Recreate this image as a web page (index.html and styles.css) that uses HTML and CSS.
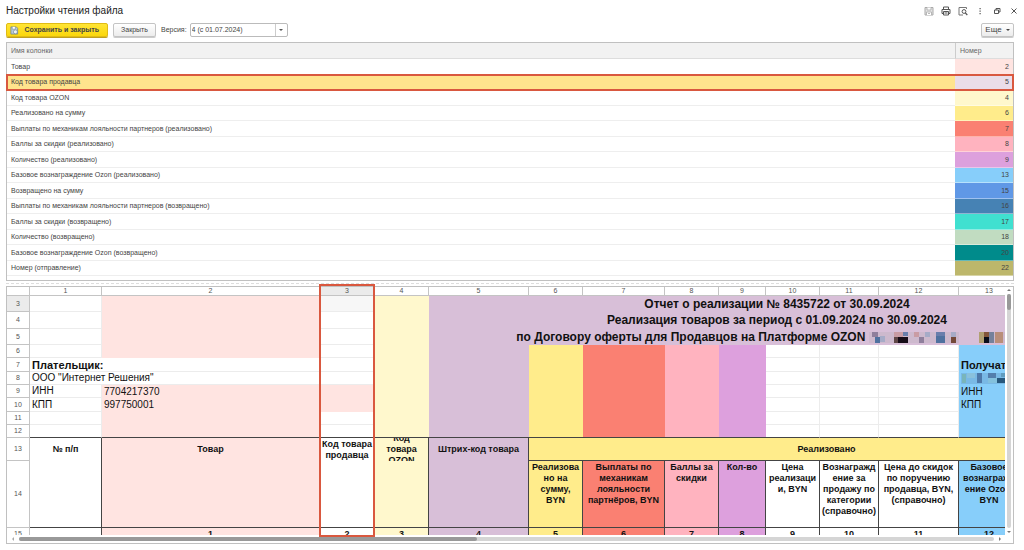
FILE: index.html
```html
<!DOCTYPE html>
<html lang="ru">
<head>
<meta charset="utf-8">
<title>Настройки чтения файла</title>
<link rel="stylesheet" href="styles.css">
</head>
<body>
<header class="titlebar">
  <h1>Настройки чтения файла</h1>
  <div class="tools">
    <button class="tool" aria-label="Сохранить"><svg viewBox="0 0 10 10"><path d="M1 1.500h8v7.500H1z" fill="#e4e4e4" stroke="#aaa"/><path d="M3 1.500v2.500h4V1.500M2.500 9V6h5v3M4 7.500h2" fill="#fff" stroke="#aaa" stroke-width=".8"/></svg></button>
    <button class="tool" aria-label="Печать"><svg viewBox="0 0 10 10"><path d="M2.500 3V1h5v2M2.500 7.500h-1.500V3.500h8v4H7.500M2.500 5.500h5V9h-5zM3.500 7h3" fill="none" stroke="#555"/></svg></button>
    <button class="tool" aria-label="Просмотр"><svg viewBox="0 0 10 10"><path d="M8.500 3V1.500h-7.500v7.500h4" fill="none" stroke="#777"/><circle cx="6" cy="5.500" r="1.900" fill="#fff" stroke="#555"/><path d="M7.400 7l1.900 2" stroke="#555" stroke-width="1.200"/></svg></button>
    <button class="tool" aria-label="Меню"><svg viewBox="0 0 10 10"><path d="M4.500 2h1.200v1.200H4.500zM4.500 4.500h1.200v1.200H4.500zM4.500 7h1.200v1.200H4.500z" fill="#555"/></svg></button>
    <button class="tool" aria-label="Восстановить"><svg viewBox="0 0 10 10"><path d="M4 4V2.500h4V6H6.500M2.500 4h4v3.500h-4z" fill="none" stroke="#555"/></svg></button>
    <button class="tool" aria-label="Закрыть окно"><svg viewBox="0 0 10 10"><path d="M2.500 2.500l5 5M7.500 2.500l-5 5" stroke="#555"/></svg></button>
  </div>
</header>

<div class="commands">
  <button class="btn primary"><svg viewBox="0 0 10 10"><path d="M1 1h6l1.500 1.500V9H1z" fill="#b9cbd8" stroke="#6b8190" stroke-width=".8"/><path d="M2.500 1v2.500h3.500V1" fill="#fff" stroke="#6b8190" stroke-width=".6"/><circle cx="6" cy="6.500" r="2.200" fill="#eef3f6" stroke="#6b8190" stroke-width=".7"/></svg>Сохранить и закрыть</button>
  <button class="btn close">Закрыть</button>
  <label for="version">Версия:</label>
  <span class="combo"><select id="version"><option>4 (с 01.07.2024)</option></select></span>
  <button class="btn more">Еще<i class="caret"></i></button>
</div>

<table class="list">
  <thead><tr><th>Имя колонки</th><th class="num">Номер</th></tr></thead>
  <tbody>
    <tr><td>Товар</td><td class="num c-rose">2</td></tr>
    <tr class="selected"><td>Код товара продавца</td><td class="num c-lilac">5</td></tr>
    <tr><td>Код товара OZON</td><td class="num c-cream">4</td></tr>
    <tr><td>Реализовано на сумму</td><td class="num c-yellow">6</td></tr>
    <tr><td>Выплаты по механикам лояльности партнеров (реализовано)</td><td class="num c-salmon">7</td></tr>
    <tr><td>Баллы за скидки (реализовано)</td><td class="num c-pink">8</td></tr>
    <tr><td>Количество (реализовано)</td><td class="num c-plum">9</td></tr>
    <tr><td>Базовое вознаграждение Ozon (реализовано)</td><td class="num c-sky">13</td></tr>
    <tr><td>Возвращено на сумму</td><td class="num c-blue">15</td></tr>
    <tr><td>Выплаты по механикам лояльности партнеров (возвращено)</td><td class="num c-steel">16</td></tr>
    <tr><td>Баллы за скидки (возвращено)</td><td class="num c-turquoise">17</td></tr>
    <tr><td>Количество (возвращено)</td><td class="num c-sage">18</td></tr>
    <tr><td>Базовое вознаграждение Ozon (возвращено)</td><td class="num c-teal">20</td></tr>
    <tr><td>Номер (отправление)</td><td class="num c-khaki">22</td></tr>
  </tbody>
</table>
<div class="splitter"></div>

<main class="sheet">
  <div class="view">
    <div class="cells">
      <table class="grid">
        <colgroup><col class="w23"><col class="w72"><col class="w218"><col class="w55"><col class="w54"><col class="w100"><col class="w54"><col class="w82"><col class="w54"><col class="w47"><col class="w54"><col class="w59"><col class="w80"><col class="w61"><col class="w105"></colgroup>
        <thead>
          <tr><th></th><th>1</th><th>2</th><th class="active">3</th><th>4</th><th>5</th><th>6</th><th>7</th><th>8</th><th>9</th><th>10</th><th>11</th><th>12</th><th>13</th><th></th></tr>
        </thead>
        <tbody>
          <tr class="h16"><th class="active">3</th><td></td><td class="c-rose" rowspan="4"></td><td class="current"></td><td class="c-cream to-head" rowspan="10"></td><td class="c-thistle title" colspan="10">Отчет о реализации № 8435722 от 30.09.2024</td></tr>
          <tr class="h17"><th>4</th><td></td><td></td><td class="c-thistle title" colspan="10">Реализация товаров за период с 01.09.2024 по 30.09.2024</td></tr>
          <tr class="h16"><th>5</th><td></td><td></td><td class="c-thistle title" colspan="10">по Договору оферты для Продавцов на Платформе OZON <svg class="mask" viewBox="0 0 169 11" shape-rendering="crispEdges"><path d="M0 0h90v11H0zM110 0h59v11h-59z" fill="#cdb9cd"/><path d="M3 0h6v5H3zM50 5h5v6h-5z" fill="#8f7f9c"/><path d="M6 5h5v6H6zM67 4h9v7h-9z" fill="#4f719f"/><path d="M11 4h5v6h-5zM56 0h5v5h-5zM82 0h5v5h-5z" fill="#a6abc7"/><path d="M25 0h9v5h-9zM45 0h5v5h-5z" fill="#c99ca4"/><path d="M67 0h9v4h-9zM34 0h5v4h-5z" fill="#697eac"/><path d="M25 5h5v6h-5z" fill="#604747"/><path d="M29 5h10v6H29z" fill="#160b17"/><path d="M82 5h5v6h-5z" fill="#744939"/><path d="M110 0h5v11h-5z" fill="#b1a073"/><path d="M115 5h5v6h-5z" fill="#080c18"/><path d="M115 0h5v5h-5z" fill="#83563b"/><path d="M120 0h5v11h-5z" fill="#75819b"/><path d="M126 0h8v11h-8z" fill="#b98e79"/></svg></td></tr>
          <tr class="h13"><th>6</th><td></td><td></td><td class="c-thistle to-head" rowspan="7"></td><td class="c-yellow to-head" rowspan="7"></td><td class="c-salmon to-head" rowspan="7"></td><td class="c-pink to-head" rowspan="7"></td><td class="c-plum to-head" rowspan="7"></td><td></td><td></td><td></td><td class="c-sky" colspan="2"></td></tr>
          <tr class="h14"><th>7</th><td class="payer" colspan="2">Плательщик:</td><td></td><td></td><td></td><td></td><td class="c-sky payer" colspan="2">Получатель:</td></tr>
          <tr class="h13"><th>8</th><td class="text" colspan="2">ООО "Интернет Решения"</td><td></td><td></td><td></td><td></td><td class="c-sky text" colspan="2"><svg class="mask-small" viewBox="0 0 54 11" shape-rendering="crispEdges"><path d="M0 0h54v11H0z" fill="#79b9e5"/><path d="M1 1h4v9H1z" fill="#79b5ba"/><path d="M6 0h8v5H6z" fill="#8ac1dc"/><path d="M16 0h5v10h-5z" fill="#4d78a9"/><path d="M27 0h8v5h-8z" fill="#537eac"/><path d="M27 5h9v5h-9z" fill="#83c1dd"/><path d="M36 5h8v5h-8z" fill="#27587d"/><path d="M40 0h6v4h-6z" fill="#609cbf"/></svg></td></tr>
          <tr class="h13"><th>9</th><td class="text">ИНН</td><td class="c-rose text">7704217370</td><td class="c-rose"></td><td></td><td></td><td></td><td class="c-sky text" colspan="2">ИНН</td></tr>
          <tr class="h14"><th>10</th><td class="text">КПП</td><td class="c-rose text">997750001</td><td class="c-rose"></td><td></td><td></td><td></td><td class="c-sky text" colspan="2">КПП</td></tr>
          <tr class="h13"><th>11</th><td></td><td class="c-rose to-head" rowspan="2"></td><td></td><td></td><td></td><td></td><td class="c-sky" colspan="2"></td></tr>
          <tr class="h13 before-head"><th>12</th><td></td><td></td><td></td><td></td><td></td><td class="c-sky to-head" colspan="2"></td></tr>
          <tr class="h23 head"><th>13</th><td class="open">№ п/п</td><td class="c-rose open">Товар</td><td class="open"><div class="clip">Код товара продавца</div></td><td class="c-cream open"><div class="clip">Код<br>товара<br>OZON</div></td><td class="c-thistle open">Штрих-код товара</td><td class="c-yellow" colspan="9">Реализовано</td></tr>
          <tr class="h67 head"><th>14</th><td></td><td class="c-rose"></td><td></td><td class="c-cream"></td><td class="c-thistle"></td><td class="c-yellow">Реализова<br>но на<br>сумму,<br>BYN</td><td class="c-salmon">Выплаты по механикам лояльности партнёров, BYN</td><td class="c-pink">Баллы за скидки</td><td class="c-plum">Кол-во</td><td>Цена реализаци<br>и, BYN</td><td>Вознагражд<br>ение за продажу по категории (справочно)</td><td>Цена до скидок по поручению продавца, BYN, (справочно)</td><td class="c-sky">Базовое вознагражд<br>ение Ozon,<br>BYN</td><td></td></tr>
          <tr class="h13 head"><th>15</th><td></td><td class="c-rose">1</td><td>2</td><td class="c-cream">3</td><td class="c-thistle">4</td><td class="c-yellow">5</td><td class="c-salmon">6</td><td class="c-pink">7</td><td class="c-plum">8</td><td>9</td><td>10</td><td>11</td><td class="c-sky">12</td><td></td></tr>
        </tbody>
      </table>
    </div>
    <div class="vbar"><i class="arrow up"></i><div class="track"><div class="thumb"></div></div><i class="arrow down"></i></div>
  </div>
  <div class="hbar"><i class="arrow left"></i><div class="track"><div class="thumb"></div></div><i class="arrow right"></i></div>
  <div class="marker"></div>
</main>
</body>
</html>
```
FILE: styles.css
```css
* { box-sizing: border-box; }
body {
  margin: 0;
  height: 100vh;
  padding: 4px 10px 6px 6px;
  display: flex;
  flex-direction: column;
  background: #fff;
  color: #444;
  font: 7px/10px "Liberation Sans", Arial, sans-serif;
}
button, select { font: inherit; color: inherit; margin: 0; }

.titlebar { display: flex; justify-content: space-between; height: 14px; align-items: center; margin-right: -5px; flex: none; }
h1 { margin: 0; font-size: 10px; line-height: 14px; font-weight: 400; color: #222; }
.tools { display: flex; gap: 7px; }
.tool { width: 10px; height: 10px; padding: 0; border: 0; background: none; }
.tool svg { display: block; width: 10px; height: 10px; }

.commands { display: flex; align-items: center; height: 14px; margin: 5px 0; flex: none; }
.btn {
  height: 14px;
  padding: 0 7px;
  border: 1px solid #c4c4c4;
  border-radius: 2px;
  background: linear-gradient(#fff, #ececec);
  box-shadow: 0 1px 0 #ccc;
  line-height: 12px;
  white-space: nowrap;
}
.primary {
  width: 102px;
  display: flex;
  align-items: center;
  justify-content: space-between;
  padding: 0 8px 0 3px;
  border-color: #e0bb15;
  background: linear-gradient(#ffe535, #fbd70c);
  box-shadow: 0 1px 0 #bf9f20;
  font-weight: 700;
}
.primary svg { width: 9px; height: 9px; }
.close { width: 43px; margin: 0 5px; }
.combo { position: relative; margin-left: 3px; }
.combo select {
  display: block;
  width: 98px;
  height: 14px;
  padding: 0 1px;
  border: 1px solid #bbb;
  border-radius: 2px;
  background: #fff;
  appearance: none;
}
.combo::before { content: ""; position: absolute; right: 12px; top: 1px; bottom: 1px; border-left: 1px solid #ccc; }
.combo::after { content: ""; position: absolute; right: 5px; top: 6px; border: 2px solid transparent; border-top-color: #555; border-bottom: 0; }
.more { margin-left: auto; width: 33px; padding: 0; display: flex; align-items: center; justify-content: center; gap: 4px; font-size: 8px; }
.caret { border: 2px solid transparent; border-top-color: #444; border-bottom: 0; }

.list {
  width: 100%;
  flex: none;
  table-layout: fixed;
  border-collapse: separate;
  border-spacing: 0;
  border: 1px solid #c0c0c0;
  padding-bottom: 4px;
}
.list th, .list td { height: 15px; padding: 0 4px; line-height: 14px; text-align: left; font-weight: 400; border-bottom: 1px solid #eee; }
.list tr:nth-child(odd) td { height: 16px; }
.list thead th { height: 16px; background: #f2f2f2; color: #666; border-bottom-color: #ddd; }
.list .num { width: 58px; text-align: right; }
.list th.num { text-align: left; border-left: 1px solid #ccc; }
.list td.num { border-bottom-color: #ffffff66; }
.selected td:first-child { background: #ffe48d; }
.selected { outline: 2px solid #d9583f; outline-offset: -1px; }

.splitter { border-top: 1px dashed #ddd; margin: 2px 0; flex: none; }

.sheet {
  position: relative;
  flex: 1;
  min-height: 0;
  display: flex;
  flex-direction: column;
  border: 1px solid #c0c0c0;
}
.view { flex: 1; min-height: 0; display: flex; }
.cells { flex: 1; min-width: 0; overflow: hidden; }
.grid { width: 1118px; table-layout: fixed; border-collapse: separate; border-spacing: 0; color: #111; }
.grid th, .grid td { padding: 0; overflow: hidden; white-space: nowrap; border: 0 solid #ececec; border-width: 0 1px 1px 0; }
.grid th { font-weight: 400; color: #555; border-color: #c4c4c4; background: #fff; }
.grid thead th { height: 9px; line-height: 8px; }
.grid th.active { background: #ebebeb; }
.grid .current { background: #f7f7f7; }
.grid td[class^="c-"] { border-width: 0; }
.w23 { width: 23px; } .w47 { width: 47px; } .w54 { width: 54px; } .w55 { width: 55px; }
.w59 { width: 59px; } .w61 { width: 61px; } .w72 { width: 72px; } .w80 { width: 80px; }
.w82 { width: 82px; } .w100 { width: 100px; } .w105 { width: 105px; } .w218 { width: 218px; }
.h13 > * { height: 13px; } .h14 > * { height: 14px; } .h16 > * { height: 16px; }
.h17 > * { height: 17px; } .h23 > * { height: 23px; } .h67 > * { height: 67px; }
.grid .title { font-size: 12px; line-height: 15px; font-weight: 700; text-align: center; }
.grid .payer { padding-left: 2px; font-size: 11px; line-height: 12px; font-weight: 700; }
.grid .text { padding-left: 2px; font-size: 10px; line-height: 12px; }
.mask { width: 169px; height: 11px; vertical-align: middle; }
.mask-small { display: block; width: 54px; height: 11px; }

.grid .before-head > td, .grid td.to-head { border-bottom: 1px solid #444; }
.grid .head td, .grid .head td[class^="c-"] { border: 0 solid #444; border-width: 0 1px 1px 0; }
.grid .head td { font-size: 9px; line-height: 11px; font-weight: 700; text-align: center; white-space: normal; }
.grid .head td.open, .grid .head td.open[class^="c-"] { border-bottom-width: 0; }
.grid .h23 td:not(.open) { line-height: 20px; }
.grid .h67 td { vertical-align: top; padding-top: 1px; }
.clip { height: 23px; overflow: hidden; display: flex; align-items: center; justify-content: center; }

.vbar { width: 8px; padding: 2px 1px; display: flex; flex-direction: column; align-items: center; gap: 3px; }
.vbar .track { flex: 1; width: 4px; border-radius: 2px; background: #d5d5d5; }
.vbar .thumb { height: 16px; border-radius: 2px; background: #999; }
.hbar { height: 8px; padding: 0 12px 0 5px; display: flex; align-items: center; gap: 5px; }
.hbar .track { flex: 1; height: 4px; border-radius: 2px; background: #d5d5d5; }
.hbar .thumb { width: 47%; height: 4px; border-radius: 2px; background: #999; }
.arrow { border: 2px solid transparent; }
.up { border-bottom-color: #777; border-top: 0; }
.down { border-top-color: #777; border-bottom: 0; }
.left { border-right-color: #aaa; border-left: 0; }
.right { border-left-color: #777; border-right: 0; }
.marker { position: absolute; left: 312px; top: -3px; bottom: 6px; width: 56px; border: 2px solid #d9583f; }

.c-rose { background: #ffe4e1; }
.c-lilac { background: #eadde8; }
.c-cream { background: #fff8cd; }
.c-yellow { background: #ffec8b; }
.c-salmon { background: #fa8072; }
.c-pink { background: #ffb3bf; }
.c-plum { background: #dda0dd; }
.c-thistle { background: #d8bfd8; }
.c-sky { background: #87cefa; }
.c-blue { background: #6098e6; }
.c-steel { background: #4682b4; }
.c-turquoise { background: #40e0d0; }
.c-sage { background: #c1dcc1; }
.c-teal { background: #008b8b; }
.c-khaki { background: #bdb76b; }
```
